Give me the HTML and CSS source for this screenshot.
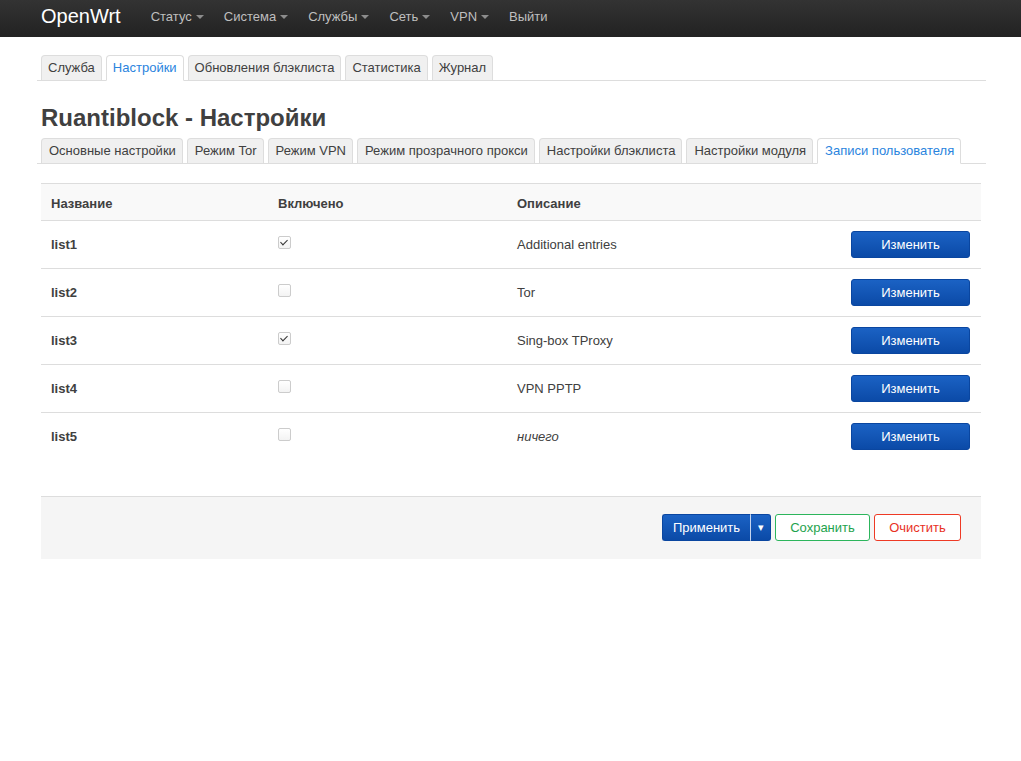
FILE: index.html
```html
<!DOCTYPE html>
<html lang="ru">
<head>
<meta charset="utf-8">
<title>Ruantiblock - Настройки</title>
<link rel="stylesheet" href="styles.css">
</head>
<body>
<header class="topbar">
  <div class="topbar-inner">
    <a class="brand" href="#">OpenWrt</a>
    <ul class="nav">
      <li class="dropdown">Статус <span class="caret"></span></li>
      <li class="dropdown">Система <span class="caret"></span></li>
      <li class="dropdown">Службы <span class="caret"></span></li>
      <li class="dropdown">Сеть <span class="caret"></span></li>
      <li class="dropdown">VPN <span class="caret"></span></li>
      <li>Выйти</li>
    </ul>
  </div>
</header>
<main class="container">
  <ul class="tabs top-tabs">
    <li class="tab">Служба</li>
    <li class="tab active">Настройки</li>
    <li class="tab">Обновления блэклиста</li>
    <li class="tab">Статистика</li>
    <li class="tab">Журнал</li>
  </ul>
  <h2 class="title">Ruantiblock - Настройки</h2>
  <ul class="tabs sub-tabs">
    <li class="tab">Основные настройки</li>
    <li class="tab">Режим Tor</li>
    <li class="tab">Режим VPN</li>
    <li class="tab">Режим прозрачного прокси</li>
    <li class="tab">Настройки блэклиста</li>
    <li class="tab">Настройки модуля</li>
    <li class="tab active">Записи пользователя</li>
  </ul>
  <table class="table">
    <colgroup>
      <col class="c-name"><col class="c-en"><col class="c-desc"><col class="c-act">
    </colgroup>
    <thead>
      <tr><th>Название</th><th>Включено</th><th>Описание</th><th></th></tr>
    </thead>
    <tbody>
      <tr><td class="name">list1</td><td><span class="cb checked"></span></td><td>Additional entries</td><td class="act"><button class="btn-edit">Изменить</button></td></tr>
      <tr><td class="name">list2</td><td><span class="cb"></span></td><td>Tor</td><td class="act"><button class="btn-edit">Изменить</button></td></tr>
      <tr><td class="name">list3</td><td><span class="cb checked"></span></td><td>Sing-box TProxy</td><td class="act"><button class="btn-edit">Изменить</button></td></tr>
      <tr><td class="name">list4</td><td><span class="cb"></span></td><td>VPN PPTP</td><td class="act"><button class="btn-edit">Изменить</button></td></tr>
      <tr><td class="name">list5</td><td><span class="cb"></span></td><td><em>ничего</em></td><td class="act"><button class="btn-edit">Изменить</button></td></tr>
    </tbody>
  </table>
  <div class="actions">
    <div class="split">
      <button class="btn-apply">Применить</button><button class="btn-apply-drop">▾</button>
    </div>
    <button class="btn-save">Сохранить</button>
    <button class="btn-reset">Очистить</button>
  </div>
</main>
</body>
</html>
```

FILE: styles.css
```css
* { box-sizing: border-box; }
html, body { margin: 0; padding: 0; }
body {
  font-family: "Liberation Sans", Arial, Helvetica, sans-serif;
  font-size: 13px;
  color: #404040;
  background: #fff;
}
.topbar {
  height: 37px;
  background: linear-gradient(to bottom, #333 0%, #222 100%);
}
.topbar-inner {
  display: flex;
  align-items: center;
  height: 37px;
  padding-left: 41px;
}
.brand {
  color: #fff;
  font-size: 20px;
  text-decoration: none;
  margin-right: 20px;
  line-height: 37px;
  margin-top: -4px;
}
.nav {
  display: flex;
  list-style: none;
  margin: 0;
  padding: 0 0 0 10px;
}
.nav li {
  color: #bfbfbf;
  font-size: 13px;
  line-height: 37px;
  margin-top: -4px;
  padding-right: 20px;
  display: flex;
  align-items: center;
}
.caret {
  display: inline-block;
  width: 0; height: 0;
  margin-left: 4px;
  margin-top: 1px;
  border-left: 4px solid transparent;
  border-right: 4px solid transparent;
  border-top: 4px solid #8c8c8c;
}
.container {
  width: 940px;
  margin-left: 41px;
}
.tabs {
  display: flex;
  list-style: none;
  margin: 0 -5px 0 -4px;
  padding: 0 0 0 4px;
  gap: 4px;
  border-bottom: 1px solid #ddd;
}
.top-tabs { margin-top: 18px; }
.tab {
  height: 25px;
  line-height: 24px;
  padding: 0 6px;
  background: #f0f0f0;
  border: 1px solid #ddd;
  border-bottom: none;
  border-radius: 4px 4px 0 0;
  color: #404040;
  margin-bottom: -1px;
  white-space: nowrap;
}
.sub-tabs .tab { padding: 0 6px 0 7px; }
.tab.active {
  background: #fff;
  color: #2a84de;
  height: 26px;
  border-bottom: 1px solid #fff;
}
.title {
  font-size: 24px;
  font-weight: bold;
  color: #404040;
  margin: 23px 0 6px 0;
  line-height: 28px;
}
.table {
  width: 940px;
  margin-top: 19px;
  border-collapse: collapse;
  table-layout: fixed;
}
.c-name { width: 227px; }
.c-en { width: 239px; }
.c-desc { width: 334px; }
.c-act { width: 140px; }
.table th {
  background: #f9f9f9;
  text-align: left;
  font-weight: bold;
  height: 37px;
  padding: 2px 10px 0 10px;
  border-top: 1px solid #ddd;
  color: #404040;
}
.table td {
  height: 48px;
  padding: 0 10px;
  border-top: 1px solid #ddd;
  vertical-align: middle;
}
.table td.name { font-weight: bold; }
.table td.act { text-align: right; padding-right: 11px; }
.table em { font-style: italic; }
.cb {
  display: inline-block;
  width: 13px; height: 13px;
  border: 1px solid #ccc;
  border-radius: 2px;
  background: linear-gradient(#fff, #f3f3f3);
  position: relative;
  vertical-align: middle;
  margin-top: -6px;
}
.cb.checked::after {
  content: "";
  position: absolute;
  left: 3px; top: 1px;
  width: 3px; height: 6px;
  border-right: 1.5px solid #333;
  border-bottom: 1.5px solid #333;
  transform: rotate(45deg);
}
button {
  font-family: inherit;
  font-size: 13px;
  cursor: pointer;
}
.btn-edit {
  width: 119px;
  height: 27px;
  color: #fff;
  background: linear-gradient(to bottom, #1b62c4 0%, #0b4aa7 100%);
  border: 1px solid #0a46a0;
  border-radius: 3px;
  padding: 0;
}
.actions {
  margin-top: 35px;
  height: 63px;
  background: #f5f5f5;
  border-top: 1px solid #ddd;
  display: flex;
  justify-content: flex-end;
  align-items: center;
  gap: 4px;
  padding: 0 20px 1px 0;
}
.split { display: flex; }
.btn-apply {
  height: 27px;
  width: 89px;
  color: #fff;
  background: linear-gradient(to bottom, #1b62c4 0%, #0b4aa7 100%);
  border: 1px solid #0a46a0;
  border-right: 1px solid #c6d5ee;
  border-radius: 3px 0 0 3px;
  padding: 0;
}
.btn-apply-drop {
  height: 27px;
  width: 20px;
  color: #fff;
  font-size: 11px;
  background: linear-gradient(to bottom, #1b62c4 0%, #0b4aa7 100%);
  border: 1px solid #0a46a0;
  border-left: none;
  border-radius: 0 3px 3px 0;
  padding: 0;
}
.btn-save {
  height: 27px;
  width: 95px;
  background: #fff;
  color: #1ea34d;
  border: 1px solid #2cb55c;
  border-radius: 3px;
  padding: 0;
}
.btn-reset {
  height: 27px;
  width: 87px;
  background: #fff;
  color: #e8321f;
  border: 1px solid #ee3a25;
  border-radius: 3px;
  padding: 0;
}
```
